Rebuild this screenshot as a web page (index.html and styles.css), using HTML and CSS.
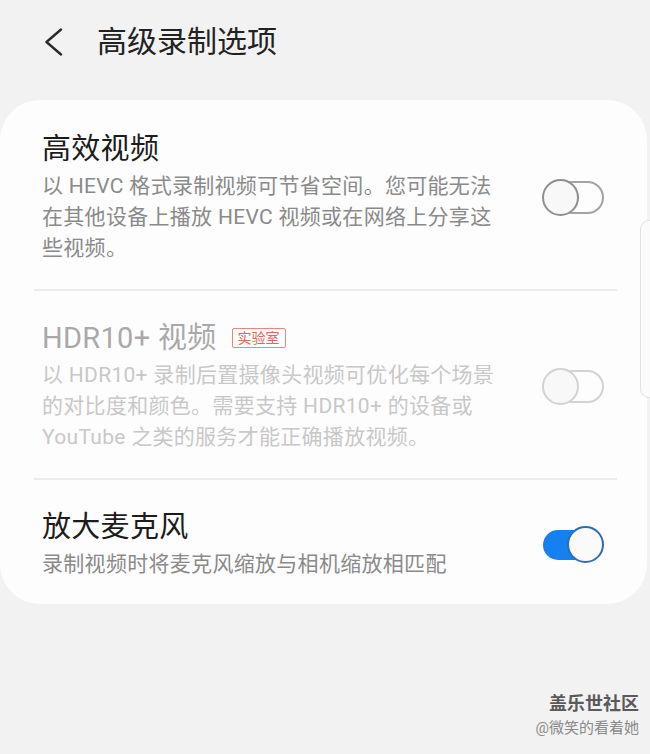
FILE: index.html
```html
<!DOCTYPE html>
<html lang="zh-CN">
<head>
    <meta charset="UTF-8">
    <meta name="viewport" content="width=device-width, initial-scale=1.0">
    <title>高级录制选项</title>
    <link rel="stylesheet" href="styles.css">
</head>
<body>
    <header class="topbar">
        <svg class="back" width="20" height="28" viewBox="0 0 20 28">
            <path d="M18 1.5 L3.5 14 L18 26.5" fill="none" stroke="#2b2b2b" stroke-width="2.4" stroke-linecap="round" stroke-linejoin="round"/>
        </svg>
        <h1>高级录制选项</h1>
    </header>

    <div class="card">
        <div class="row first">
            <div class="text">
                <div class="title">高效视频</div>
                <div class="desc">以 HEVC 格式录制视频可节省空间。您可能无法<br>在其他设备上播放 HEVC 视频或在网络上分享这<br>些视频。</div>
            </div>
            <div class="switch">
                <span class="track"></span>
                <span class="thumb"></span>
            </div>
        </div>

        <div class="divider"></div>

        <div class="row disabled">
            <div class="text">
                <div class="title">HDR10+ 视频 <span class="badge">实验室</span></div>
                <div class="desc">以 HDR10+ 录制后置摄像头视频可优化每个场景<br>的对比度和颜色。需要支持 HDR10+ 的设备或<br>YouTube 之类的服务才能正确播放视频。</div>
            </div>
            <div class="switch">
                <span class="track"></span>
                <span class="thumb"></span>
            </div>
        </div>

        <div class="divider"></div>

        <div class="row last">
            <div class="text">
                <div class="title">放大麦克风</div>
                <div class="desc">录制视频时将麦克风缩放与相机缩放相匹配</div>
            </div>
            <div class="switch on">
                <span class="track"></span>
                <span class="thumb"></span>
            </div>
        </div>
    </div>

    <div class="scroll-tab"></div>

    <div class="watermark">
        <div class="wm-name">盖乐世社区</div>
        <div class="wm-user">@微笑的看着她</div>
    </div>
</body>
</html>
```

FILE: styles.css
```css
body {
    margin: 0;
    background: #f2f2f2;
    font-family: Roboto, "Noto Sans CJK SC", sans-serif;
    height: 754px;
    position: relative;
    overflow: hidden;
}
.topbar {
    display: flex;
    align-items: center;
    height: 83px;
    padding-left: 43px;
    margin-bottom: 17px;
}
.back {
    flex: none;
}
.topbar h1 {
    margin: 0 0 0 34px;
    font-size: 30px;
    font-weight: 400;
    color: #222;
    line-height: 38px;
}
.card {
    background: #fdfdfd;
    border-radius: 40px;
    margin-right: 3px;
}
.row {
    display: flex;
    align-items: center;
    padding: 29px 43px 25px 42px;
}
.row.first {
    padding-top: 31px;
}
.row.last {
    padding-bottom: 24px;
}
.text {
    flex: 1;
}
.title {
    font-size: 29px;
    line-height: 36px;
    color: #1c1c1c;
    display: flex;
    align-items: center;
    letter-spacing: 0.3px;
}
.desc {
    margin-top: 4px;
    font-size: 21px;
    line-height: 31px;
    color: #8a8a8a;
    letter-spacing: 0.3px;
}
.badge {
    margin-left: 15px;
    font-size: 14px;
    line-height: 16px;
    padding: 1px 5px;
    color: #e0655b;
    border: 1.5px solid #e8857d;
    border-radius: 2px;
    letter-spacing: 0;
}
.disabled .title {
    color: #a9a9a9;
}
.disabled .desc {
    color: #c8c8c8;
}
.divider {
    height: 2px;
    background: #ececec;
    margin: 0 30px 0 34px;
}
.switch {
    position: relative;
    flex: none;
    width: 62px;
    height: 37px;
}
.track {
    position: absolute;
    left: 14px;
    right: 0;
    top: 2px;
    height: 33px;
    box-sizing: border-box;
    border: 2px solid #a3a3a3;
    border-radius: 17px;
}
.thumb {
    position: absolute;
    left: 0;
    top: 0;
    width: 37px;
    height: 37px;
    box-sizing: border-box;
    border: 2px solid #8f8f8f;
    border-radius: 50%;
    background: #f8f8f8;
}
.disabled .track,
.disabled .thumb {
    border-color: #d2d2d2;
}
.switch.on .track {
    left: 1px;
    right: 10px;
    top: 4px;
    height: 30px;
    border: none;
    background: #1580f0;
}
.switch.on .thumb {
    left: auto;
    right: 0;
    border-color: #2e6db3;
    background: #fafafa;
}
.scroll-tab {
    position: absolute;
    left: 640px;
    top: 220px;
    width: 24px;
    height: 178px;
    box-sizing: border-box;
    border: 1.5px solid #e2e2e2;
    border-radius: 9px;
    background: #fbfbfb;
}
.watermark {
    position: absolute;
    right: 11px;
    bottom: 15px;
    text-align: right;
}
.wm-name {
    font-size: 18px;
    font-weight: 700;
    color: #5a5a5a;
    line-height: 22px;
}
.wm-user {
    font-size: 15px;
    color: #8a8a8a;
    line-height: 22px;
    margin-top: 2px;
}
```
